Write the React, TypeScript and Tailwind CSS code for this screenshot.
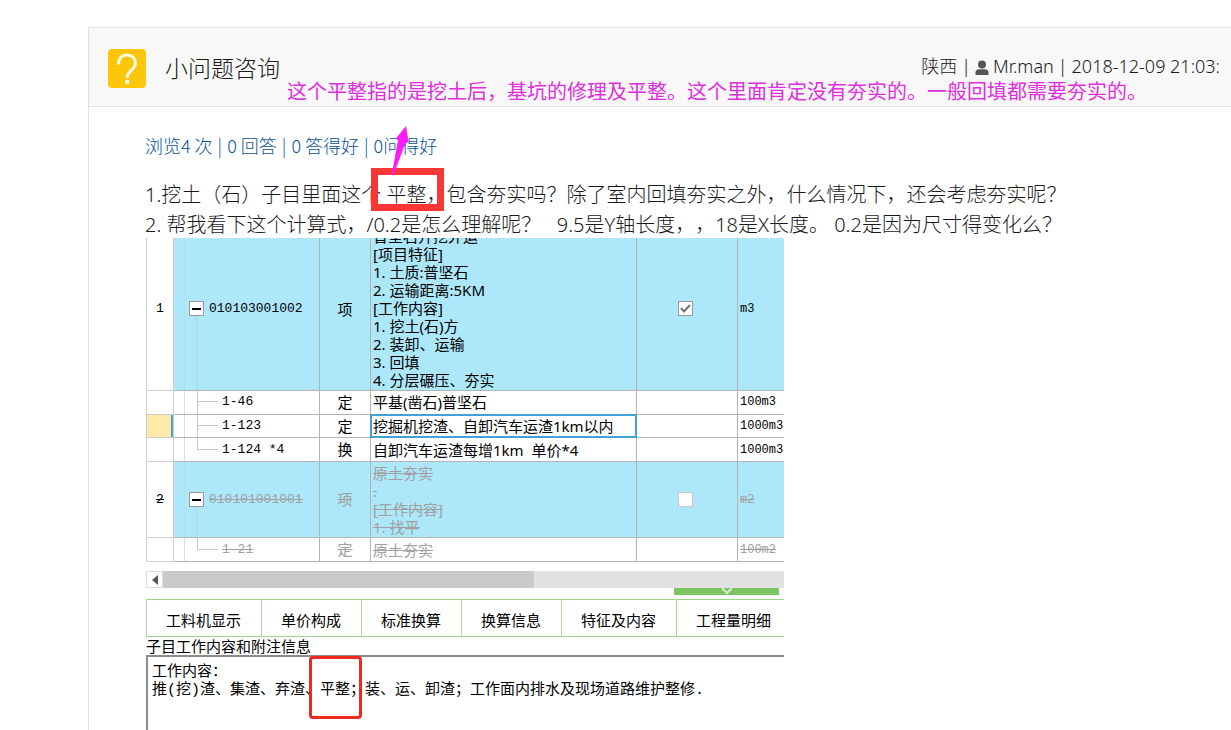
import React from "react";

interface Row {
  no?: string;
  code: string;
  kind: string;
  lines: string[];
  unit: string;
  height: string;
  parent?: boolean;
  checked?: boolean;
  selected?: boolean;
  removed?: boolean;
  last?: boolean;
}

const rows: Row[] = [
  {
    no: "1",
    code: "010103001002",
    kind: "项",
    lines: [
      "普坚石开挖外运",
      "[项目特征]",
      "1. 土质:普坚石",
      "2. 运输距离:5KM",
      "[工作内容]",
      "1. 挖土(石)方",
      "2. 装卸、运输",
      "3. 回填",
      "4. 分层碾压、夯实",
    ],
    unit: "m3",
    height: "h-[152px]",
    parent: true,
    checked: true,
  },
  { code: "1-46", kind: "定", lines: ["平基(凿石)普坚石"], unit: "100m3", height: "h-6" },
  {
    code: "1-123",
    kind: "定",
    lines: ["挖掘机挖渣、自卸汽车运渣1km以内"],
    unit: "1000m3",
    height: "h-[23px]",
    selected: true,
  },
  {
    code: "1-124 *4",
    kind: "换",
    lines: ["自卸汽车运渣每增1km  单价*4"],
    unit: "1000m3",
    height: "h-6",
    last: true,
  },
  {
    no: "2",
    code: "010101001001",
    kind: "项",
    lines: ["原土夯实", ".", "[工作内容]", "1. 找平"],
    unit: "m2",
    height: "h-[76px]",
    parent: true,
    removed: true,
  },
  {
    code: "1-21",
    kind: "定",
    lines: ["原土夯实"],
    unit: "100m2",
    height: "h-6",
    removed: true,
    last: true,
  },
];

const tabs = ["工料机显示", "单价构成", "标准换算", "换算信息", "特征及内容", "工程量明细"];

const stats = ["浏览4 次", "0 回答", "0 答得好", "0问得好"];

const QuestionIcon = () => (
  <svg viewBox="0 0 38 39" className="w-[38px] h-[39px] shrink-0" aria-hidden="true">
    <rect width="38" height="39" rx="4" fill="#fec60a" />
    <path
      d="M10.500 15.500C10.500 9.500 14 6 19 6s8.500 3.300 8.500 8c0 3.600-2 5.400-4.500 7.700-2.600 2.400-3.800 4-3.800 7"
      fill="none"
      stroke="#fffbe8"
      strokeWidth="3"
    />
    <circle cx="19.200" cy="33" r="2.200" fill="#fffbe8" />
  </svg>
);

const UserIcon = () => (
  <svg viewBox="0 0 14 16" className="w-3.5 h-4 mt-1" fill="#555" aria-hidden="true">
    <circle cx="7" cy="4.500" r="4" />
    <path d="M0.500 15v-2.500C0.500 10.500 2 9.500 4 9.200h6c2 .3 3.500 1.300 3.500 3.300V15z" />
  </svg>
);

const Arrow = () => (
  <svg
    viewBox="0 0 24 50"
    className="absolute left-[243px] -top-[54px] w-6 h-[50px]"
    fill="#fb1cf7"
    aria-hidden="true"
  >
    <path d="M18 0L7.700 12.700l2.300 1.600L3.700 49l1.600.5L17.500 17l3.200-.7z" />
  </svg>
);

// connector lines between a parent item and its sub items
const Branch = ({ last }: { last?: boolean }) => (
  <span className="absolute inset-y-0 left-[10px] w-[34px] border-l border-[#dcdcdc]">
    <span className="absolute left-3 top-0 w-[21px] h-1/2 border-l border-b border-[#c8c8c8]" />
    {!last && (
      <span className="absolute left-3 top-1/2 h-1/2 border-l border-[#c8c8c8]" />
    )}
  </span>
);

const ItemRow = ({ row }: { row: Row }) => {
  const tone = row.removed ? "text-[#a0a0a0] line-through" : "text-black";
  const bg = row.parent ? "bg-[#ade8fa]" : "bg-white";
  // the first item is scrolled up a little, so its centred cells sit higher
  const pad = row.checked ? "pb-2.5" : "pb-0";
  const base = `border border-[#b4b4b4] px-0 pt-0 ${bg} ${tone}`;
  const cell = `${base} ${pad}`;

  return (
    <tr className={row.height}>
      <td
        className={`relative border border-[#cfcfcf] px-0 pt-0 text-center font-[Liberation_Mono] text-[13px] text-black ${pad} ${
          row.selected ? "bg-[#fdeaa8]" : "bg-white"
        } ${row.removed ? "line-through" : ""}`}
      >
        {row.no}
        {row.selected && <span className="absolute inset-y-0 right-0 w-0.5 bg-[#45a6d4]" />}
      </td>
      <td className={`relative font-[Liberation_Mono] text-[13px] ${cell}`}>
        {row.parent ? (
          <>
            <span className="absolute inset-y-0 left-[10px] border-l border-[#bcdbe5]" />
            <span className="absolute bottom-0 left-[22px] h-1/2 border-l border-[#c0cfd4]" />
            <div className="relative flex items-center gap-[5px] pl-[15px]">
              <button
                aria-label="收起"
                className="w-[15px] h-[15px] flex items-center justify-center bg-white border border-[#999]"
              >
                <span className="w-[9px] h-0.5 bg-black" />
              </button>
              <span className={row.removed ? "line-through" : ""}>{row.code}</span>
            </div>
          </>
        ) : (
          <>
            <Branch last={row.last} />
            <span className="pl-12">{row.code}</span>
          </>
        )}
      </td>
      <td className={`text-center ${cell}`}>{row.kind}</td>
      <td className={`relative pb-0 ${base}`}>
        {row.selected && (
          <span className="absolute -inset-px border-2 border-[#40a3d3]" />
        )}
        <div className="flex flex-col justify-end max-h-[151px] overflow-hidden pl-0.5 leading-[18px] whitespace-pre">
          {row.lines.map((line, i) => (
            <div key={i} className={row.removed && line !== "." ? "line-through" : ""}>
              {line}
            </div>
          ))}
        </div>
      </td>
      <td className={cell}>
        {row.parent && (
          <label className="relative flex justify-center pr-[3px]">
            <input
              type="checkbox"
              aria-label={row.code}
              defaultChecked={row.checked}
              className="peer appearance-none w-[15px] h-[15px] bg-white border border-[#cfc8c4] checked:border-[#999]"
            />
            <svg
              viewBox="0 0 15 15"
              className="absolute w-[15px] h-[15px] hidden peer-checked:block"
              fill="none"
              stroke="#777"
              strokeWidth="2"
            >
              <path d="M3 7l3 3.500L12 4" />
            </svg>
          </label>
        )}
      </td>
      <td className={`font-[Liberation_Mono] text-xs ${cell}`}>
        <div className="pl-0.5">{row.unit}</div>
      </td>
    </tr>
  );
};

const Estimate = () => (
  <div className="w-full max-w-[638px] ml-px -mt-0.5 overflow-hidden text-[15px] text-black">
    <table className="w-full table-fixed border-collapse [&_tr:first-child>td]:border-t-0 [&_td:last-child]:border-r-0">
      <colgroup>
        <col className="w-[27px]" />
        <col className="w-[146px]" />
        <col className="w-[51px]" />
        <col className="w-[266px]" />
        <col className="w-[101px]" />
        <col />
      </colgroup>
      <tbody>
        {rows.map((row) => (
          <ItemRow key={row.code} row={row} />
        ))}
      </tbody>
    </table>

    <div className="flex h-[17px] mt-[9px] bg-[#e1e1e1]">
      <button
        aria-label="向左"
        className="w-[17px] flex items-center justify-center bg-white border border-[#ddd]"
      >
        <svg viewBox="0 0 6 10" className="w-1.5 h-2.5" fill="#555">
          <path d="M6 0v10L0 5z" />
        </svg>
      </button>
      <div className="w-[371px] bg-[#cacaca]" />
    </div>

    <div className="flex justify-end pr-[5px]">
      <div className="w-[105px] h-[7px] flex justify-center bg-[#7dc462]">
        <svg viewBox="0 0 12 7" className="w-3 h-[7px]" fill="none" stroke="#d8efcf" strokeWidth="2">
          <path d="M1 0l5 5 5-5" />
        </svg>
      </div>
    </div>

    <div className="flex mt-1 border-y border-[#9fd48a]">
      {tabs.map((tab) => (
        <button
          key={tab}
          className="h-9 shrink-0 border-l border-[#a9dc95] pl-[19px] pr-5 pt-1 whitespace-nowrap"
        >
          {tab}
        </button>
      ))}
    </div>

    <label htmlFor="work" className="block leading-[18px]">
      子目工作内容和附注信息
    </label>
    <div className="relative">
      <textarea
        id="work"
        readOnly
        className="block w-full h-[75px] resize-none overflow-hidden border-l-2 border-t-2 border-[#8c8c8c] pl-1 pt-[7px] leading-[18px] outline-none font-['Liberation_Mono','Noto_Sans_CJK_SC',monospace]"
        defaultValue={
          "工作内容：\n推(挖)渣、集渣、弃渣、平整；装、运、卸渣；工作面内排水及现场道路维护整修."
        }
      />
      <span className="absolute left-[163px] top-px w-[53px] h-[63px] border-[3px] border-[#f0281e] rounded-sm" />
    </div>
  </div>
);

const App = () => {
  return (
    <div className="h-screen overflow-hidden bg-white pt-[27px] pl-[88px] font-['Noto_Sans','Noto_Sans_CJK_SC',sans-serif] text-[#1a1a1a] [text-spacing-trim:space-all]">
      <div className="border-l border-t border-[#e2e2e2]">
        <header className="relative h-[79px] flex items-center bg-[#f8f8f8] border-b border-[#e2e2e2] pt-0.5 pl-[19px] pr-[11px]">
          <QuestionIcon />
          <h1 className="ml-[19px] text-[23px] font-light">小问题咨询</h1>
          <div className="ml-auto flex items-center gap-1 pb-1 text-lg font-light">
            <span>陕西</span>
            <span>|</span>
            <UserIcon />
            <span>Mr.man</span>
            <span>|</span>
            <span>2018-12-09 21:03:</span>
          </div>
          <p className="absolute left-[198px] top-[50px] text-xl leading-7 text-[#e02ee0] whitespace-nowrap">
            这个平整指的是挖土后，基坑的修理及平整。这个里面肯定没有夯实的。一般回填都需要夯实的。
          </p>
        </header>

        <main className="pt-6 pl-14">
          <div className="flex gap-[5px] text-lg leading-7 font-light text-[#0a5296] font-['Noto_Sans_CJK_SC',sans-serif]">
            {stats.map((stat, i) => (
              <React.Fragment key={stat}>
                {i > 0 && <span>|</span>}
                <span>{stat}</span>
              </React.Fragment>
            ))}
          </div>
          <div className="relative mt-[21px] text-xl leading-[30px] font-light whitespace-pre">
            <p>
              1.挖土（石）子目里面这个 平整，包含夯实吗？除了室内回填夯实之外，什么情况下，还会考虑夯实呢？
            </p>
            <p>
              2. 帮我看下这个计算式，/0.2是怎么理解呢？   9.5是Y轴长度，，18是X长度。 0.2是因为尺寸得变化么？
            </p>
            <span className="absolute left-[226px] -top-3 w-[73px] h-[43px] border-[7px] border-[#f93535]" />
            <Arrow />
          </div>
          <Estimate />
        </main>
      </div>
    </div>
  );
};

export default App;
